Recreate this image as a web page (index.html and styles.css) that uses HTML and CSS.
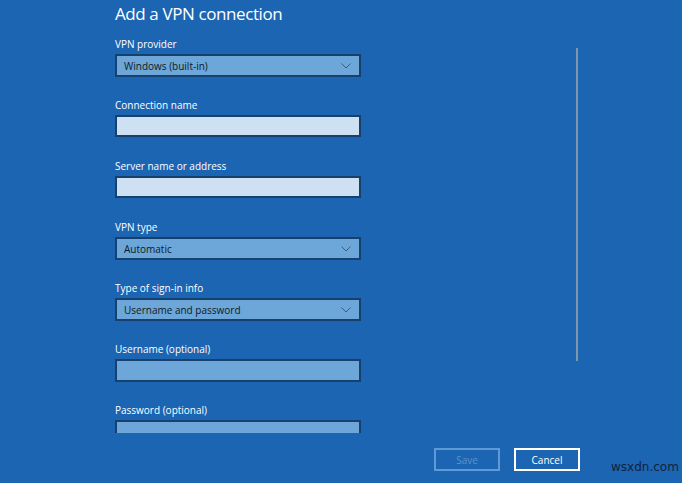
FILE: index.html
```html
<!DOCTYPE html>
<html>
<head>
<meta charset="utf-8">
<link rel="stylesheet" href="styles.css">
</head>
<body>
<div class="window">
  <div class="scroll">
    <div class="form">
      <h1 class="title">Add a VPN connection</h1>
      <div class="field">
        <label class="label">VPN provider</label>
        <div class="select"><span>Windows (built-in)</span>
          <svg class="chev" width="10" height="6" viewBox="0 0 10 6"><path d="M0.5 0.5 L5 5 L9.5 0.5" fill="none" stroke="#3a5d80" stroke-width="1"/></svg>
        </div>
      </div>
      <div class="field">
        <label class="label">Connection name</label>
        <div class="input"></div>
      </div>
      <div class="field">
        <label class="label">Server name or address</label>
        <div class="input"></div>
      </div>
      <div class="field">
        <label class="label">VPN type</label>
        <div class="select"><span>Automatic</span>
          <svg class="chev" width="10" height="6" viewBox="0 0 10 6"><path d="M0.5 0.5 L5 5 L9.5 0.5" fill="none" stroke="#3a5d80" stroke-width="1"/></svg>
        </div>
      </div>
      <div class="field">
        <label class="label">Type of sign-in info</label>
        <div class="select"><span>Username and password</span>
          <svg class="chev" width="10" height="6" viewBox="0 0 10 6"><path d="M0.5 0.5 L5 5 L9.5 0.5" fill="none" stroke="#3a5d80" stroke-width="1"/></svg>
        </div>
      </div>
      <div class="field">
        <label class="label">Username (optional)</label>
        <div class="input dim"></div>
      </div>
      <div class="field">
        <label class="label">Password (optional)</label>
        <div class="input dim"></div>
      </div>
    </div>
    <div class="scrollbar"></div>
  </div>
  <div class="footer">
    <button class="btn disabled">Save</button>
    <button class="btn">Cancel</button>
  </div>
  <div class="watermark">wsxdn.com</div>
</div>
</body>
</html>
```
FILE: styles.css
```css
html, body {
  margin: 0;
  padding: 0;
}
body {
  background: #1c65b3;
  font-family: "Open Sans", "Noto Sans", sans-serif;
  color: #fff;
  width: 682px;
  height: 483px;
  overflow: hidden;
}
.window {
  position: relative;
  width: 682px;
  height: 483px;
}
.scroll {
  display: flex;
  height: 433px;
  overflow: hidden;
}
.form {
  padding-left: 115px;
  width: 246px;
}
.title {
  margin: 0;
  padding-top: 2px;
  font-size: 17px;
  font-weight: 400;
  line-height: 24px;
  height: 34px;
  letter-spacing: -0.4px;
}
.field {
  height: 61px;
}
.label {
  display: block;
  font-size: 10px;
  line-height: 14px;
  height: 17px;
  padding-top: 1px;
}
.select, .input {
  box-sizing: border-box;
  height: 23px;
  border: 2px solid #17406c;
  display: flex;
  align-items: center;
  justify-content: space-between;
  padding: 0 8px 0 7px;
  font-size: 10px;
  color: #0f1a26;
}
.select {
  background: #6da6d8;
}
.input {
  background: #cde1f2;
  height: 22px;
}
.input.dim {
  background: #6da6d8;
  height: 23px;
}
.chev {
  display: block;
}
.scrollbar {
  margin-left: 215px;
  margin-top: 48px;
  width: 2px;
  height: 313px;
  background: #7d97ab;
}
.footer {
  display: flex;
  gap: 14px;
  padding-left: 434px;
  padding-top: 15px;
}
.btn {
  box-sizing: border-box;
  width: 66px;
  height: 23px;
  background: transparent;
  border: 2px solid #fff;
  color: #fff;
  font-family: "Open Sans", "Noto Sans", sans-serif;
  font-size: 10px;
  padding: 0;
}
.btn.disabled {
  border-color: #5e9bd6;
  color: #5a94cc;
}
.watermark {
  position: absolute;
  left: 611px;
  top: 460px;
  font-family: "DejaVu Sans", sans-serif;
  font-size: 12px;
  color: #10233a;
}
```
